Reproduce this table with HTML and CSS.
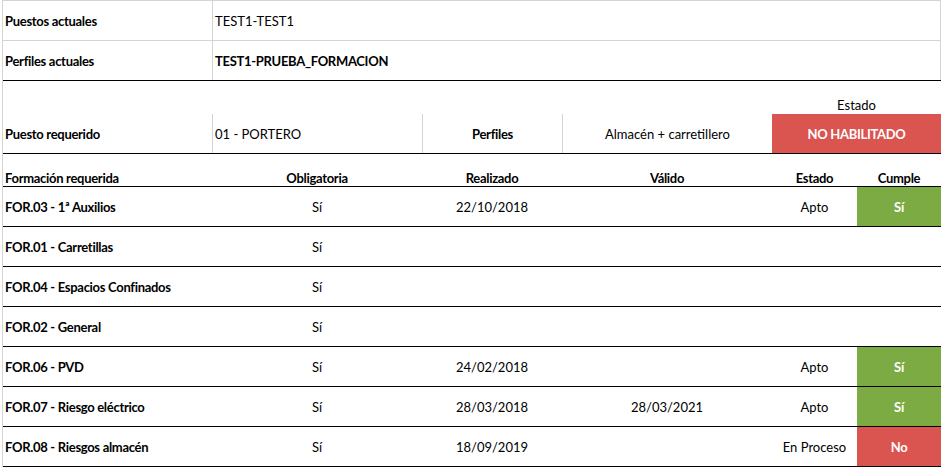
FILE: index.html
```html
<!DOCTYPE html>
<html lang="es">
<head>
<meta charset="utf-8">
<title>Formación</title>
<link rel="stylesheet" href="styles.css">
</head>
<body>
<div class="sheet">
  <div class="top">
    <div class="trow">
      <div class="cell b">Puestos actuales</div>
      <div class="cell val sep">TEST1-TEST1</div>
    </div>
    <div class="trow last">
      <div class="cell b">Perfiles actuales</div>
      <div class="cell val sep b">TEST1-PRUEBA_FORMACION</div>
    </div>
  </div>
  <div class="gap">
    <div class="gap-label">Estado</div>
  </div>
  <div class="req">
    <div class="cell b">Puesto requerido</div>
    <div class="cell val sep">01 - PORTERO</div>
    <div class="cell center sep b">Perfiles</div>
    <div class="cell center sep">Almacén + carretillero</div>
    <div class="cell center status-bad b">NO HABILITADO</div>
  </div>
  <div class="grid head">
    <div class="cell b">Formación requerida</div>
    <div class="cell center b">Obligatoria</div>
    <div class="cell center b">Realizado</div>
    <div class="cell center b">Válido</div>
    <div class="cell center b">Estado</div>
    <div class="cell center b">Cumple</div>
  </div>
  <div class="grid">
    <div class="cell b">FOR.03 - 1ª Auxilios</div>
    <div class="cell center">Sí</div>
    <div class="cell center">22/10/2018</div>
    <div class="cell center"></div>
    <div class="cell center">Apto</div>
    <div class="cell center ok b">Sí</div>
  </div>
  <div class="grid">
    <div class="cell b">FOR.01 - Carretillas</div>
    <div class="cell center">Sí</div>
    <div class="cell center"></div>
    <div class="cell center"></div>
    <div class="cell center"></div>
    <div class="cell center"></div>
  </div>
  <div class="grid">
    <div class="cell b">FOR.04 - Espacios Confinados</div>
    <div class="cell center">Sí</div>
    <div class="cell center"></div>
    <div class="cell center"></div>
    <div class="cell center"></div>
    <div class="cell center"></div>
  </div>
  <div class="grid">
    <div class="cell b">FOR.02 - General</div>
    <div class="cell center">Sí</div>
    <div class="cell center"></div>
    <div class="cell center"></div>
    <div class="cell center"></div>
    <div class="cell center"></div>
  </div>
  <div class="grid">
    <div class="cell b">FOR.06 - PVD</div>
    <div class="cell center">Sí</div>
    <div class="cell center">24/02/2018</div>
    <div class="cell center"></div>
    <div class="cell center">Apto</div>
    <div class="cell center ok b">Sí</div>
  </div>
  <div class="grid">
    <div class="cell b">FOR.07 - Riesgo eléctrico</div>
    <div class="cell center">Sí</div>
    <div class="cell center">28/03/2018</div>
    <div class="cell center">28/03/2021</div>
    <div class="cell center">Apto</div>
    <div class="cell center ok b">Sí</div>
  </div>
  <div class="grid">
    <div class="cell b">FOR.08 - Riesgos almacén</div>
    <div class="cell center">Sí</div>
    <div class="cell center">18/09/2019</div>
    <div class="cell center"></div>
    <div class="cell center">En Proceso</div>
    <div class="cell center bad b">No</div>
  </div>
</div>
</body>
</html>
```
FILE: styles.css
```css
* { box-sizing: border-box; }
html, body { margin: 0; padding: 0; background: #fff; }
body {
  font-family: Lato, "Liberation Sans", sans-serif;
  font-size: 13px;
  color: #000;
}
.sheet {
  margin-left: 2px;
  width: 939px;
  border-left: 1px solid #d4d4d4;
}
.cell {
  display: flex;
  align-items: center;
  padding-left: 2px;
  white-space: nowrap;
  overflow: hidden;
}
.b { font-weight: 700; letter-spacing: -0.3px; }
.center { justify-content: center; padding-left: 0; }
.sep { border-left: 1px solid #d4d4d4; }
.val { padding-left: 2px; }

.top {
  border-top: 1px solid #d4d4d4;
  border-right: 1px solid #d4d4d4;
  width: 938px;
}
.trow {
  display: grid;
  grid-template-columns: 209px 1fr;
  height: 40px;
  border-bottom: 1px solid #d4d4d4;
}
.trow.last {
  border-bottom: none;
  height: 39px;
}
.gap {
  border-top: 1px solid #000;
  height: 34px;
  display: flex;
  justify-content: flex-end;
  align-items: flex-end;
}
.gap-label {
  width: 169px;
  text-align: center;
  padding-bottom: 1px;
}
.req {
  display: grid;
  grid-template-columns: 209px 210px 140px 210px 169px;
  height: 40px;
  border-bottom: 1px solid #000;
}
.status-bad {
  background: #da5450;
  color: #fff;
}
.grid {
  display: grid;
  grid-template-columns: 209px 210px 140px 210px 85px 84px;
  height: 40px;
  border-bottom: 1px solid #000;
}
.grid.head {
  height: 33px;
}
.grid.head .cell {
  align-items: flex-end;
  padding-bottom: 0;
}
.ok { background: #7bab42; color: #fff; }
.bad { background: #da5450; color: #fff; }
```
